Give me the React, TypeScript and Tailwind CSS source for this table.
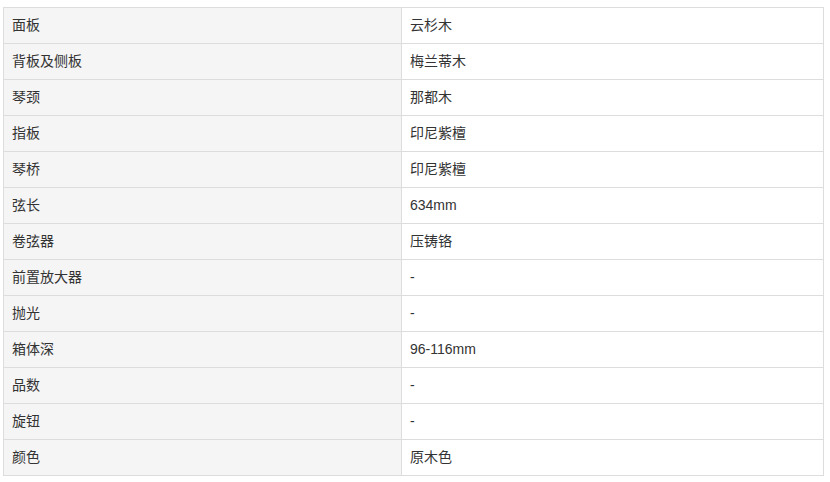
import React from 'react';

// 规格参数表
const specs: [string, string][] = [
  ['面板', '云杉木'],
  ['背板及侧板', '梅兰蒂木'],
  ['琴颈', '那都木'],
  ['指板', '印尼紫檀'],
  ['琴桥', '印尼紫檀'],
  ['弦长', '634mm'],
  ['卷弦器', '压铸铬'],
  ['前置放大器', '-'],
  ['抛光', '-'],
  ['箱体深', '96-116mm'],
  ['品数', '-'],
  ['旋钮', '-'],
  ['颜色', '原木色'],
];

const App: React.FC = () => {
  return (
    <div
      className="bg-white pt-[7px] pl-[3px] w-[830px] h-[482px] text-[14px] text-[#333]"
      style={{ fontFamily: '"Liberation Sans", "Noto Sans CJK SC", sans-serif' }}
    >
      <table className="border-collapse w-[821px] table-fixed">
        <tbody>
          {specs.map(([k, v]) => (
            <tr key={k} className="h-[36px]">
              <td className="w-[398px] border border-[#dddddd] bg-[#f5f5f5] px-2 py-0 align-middle">{k}</td>
              <td className="border border-[#dddddd] bg-white px-2 py-0 align-middle">{v}</td>
            </tr>
          ))}
        </tbody>
      </table>
    </div>
  );
};

export default App;
